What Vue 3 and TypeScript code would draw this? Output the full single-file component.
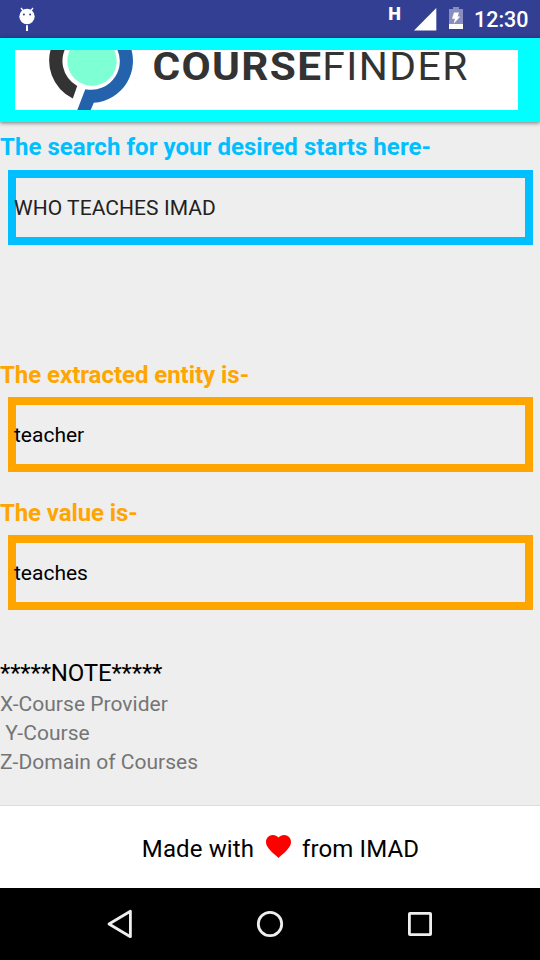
<script setup lang="ts">
interface Field {
  id: string
  label: string
  value: string
  tone: 'blue' | 'orange'
}

const fields: Field[] = [
  { id: 'query', label: 'The search for your desired starts here-', value: 'WHO TEACHES IMAD', tone: 'blue' },
  { id: 'entity', label: 'The extracted entity is-', value: 'teacher', tone: 'orange' },
  { id: 'value', label: 'The value is-', value: 'teaches', tone: 'orange' },
]

const notes: string[] = ['X-Course Provider', ' Y-Course', 'Z-Domain of Courses']
</script>

<template>
  <div class="screen">
    <header class="status">
      <svg class="bug" width="18" height="26" viewBox="0 0 18 26">
        <path d="M3 2l2.5 3M15 2l-2.5 3" stroke="#fff" stroke-width="1.4" />
        <circle cx="9" cy="10.5" r="7.7" fill="#fff" />
        <circle cx="5.9" cy="8.4" r="1" fill="#323f92" />
        <circle cx="12.1" cy="8.4" r="1" fill="#323f92" />
        <path d="M8 19.3h2V25H8z" fill="#fff" />
      </svg>
      <span class="net">H</span>
      <svg class="signal" width="23" height="23" viewBox="0 0 23 23">
        <path d="M0 22.5L22.3 0v22.5z" fill="#fff" />
      </svg>
      <svg class="battery" width="14" height="22" viewBox="0 0 14 22">
        <path d="M4 0h6v2h4v15H0V2h4z" fill="#fff" fill-opacity=".42" />
        <path d="M0 17h14v5H0z" fill="#fff" />
        <path d="M5 5.5h5L8.7 9.4h2.5L4.7 16.8l1.2-5H3z" fill="#fff" />
      </svg>
      <span class="clock">12:30</span>
    </header>

    <div class="toolbar">
      <svg class="logo" width="503" height="60" viewBox="0 0 503 60">
        <defs>
          <clipPath id="logo-frame"><rect width="503" height="60" /></clipPath>
        </defs>
        <g clip-path="url(#logo-frame)">
          <path d="M37.6-6A42 42 0 0 0 57.8 48.5L62.2 36A28.5 28.5 0 0 1 53.1-6z" fill="#333" />
          <path d="M98.9-6A28.5 28.5 0 0 1 70.3 39.2L62.3 60H75.7L78.8 52.8A42 42 0 0 0 114.4-6z" fill="#2463ab" />
          <circle cx="77" cy="11" r="24.7" fill="#7fffd4" />
        </g>
        <text class="logo-bold" transform="translate(137.5 30) scale(1.1 1)" textLength="153.2" lengthAdjust="spacing">COURSE</text>
        <text class="logo-thin" transform="translate(307.2 30) scale(1.06 1)" textLength="137" lengthAdjust="spacing">FINDER</text>
      </svg>
    </div>

    <main class="content">
      <section v-for="field in fields" :key="field.id" class="field" :class="[field.tone, field.id]">
        <h2 class="label">{{ field.label }}</h2>
        <div class="box"><span class="text">{{ field.value }}</span></div>
      </section>
      <section class="notes">
        <h3 class="note-title">*****NOTE*****</h3>
        <p v-for="note in notes" :key="note" class="note">{{ note }}</p>
      </section>
    </main>

    <footer class="credit">
      <span>Made with</span>
      <svg class="heart" width="25" height="23" viewBox="0 0 25 23">
        <path d="M12.5 23l-1.8-1.65C4.25 15.5 0 11.65 0 6.9 0 3.05 3 0 6.9 0c2.15 0 4.2 1 5.6 2.6C13.9 1 15.95 0 18.1 0 22 0 25 3.05 25 6.9c0 4.75-4.25 8.6-10.7 14.45z" fill="#f00" />
      </svg>
      <span>from IMAD</span>
    </footer>

    <nav class="navbar">
      <svg width="30" height="30" viewBox="0 0 30 30"><path d="M4 15L25.4 2.3v25.4z" /></svg>
      <svg width="30" height="30" viewBox="0 0 30 30"><circle cx="15" cy="15" r="11.7" /></svg>
      <svg width="30" height="30" viewBox="0 0 30 30"><rect x="4.4" y="4.4" width="21.2" height="21.2" rx=".6" /></svg>
    </nav>
  </div>
</template>

<style>
body {
  margin: 0;
}
</style>

<style scoped>
.screen {
  width: 540px;
  height: 960px;
  display: flex;
  flex-direction: column;
  overflow: hidden;
  background: #eee;
  color: #000;
  font-family: Roboto, sans-serif;
}
.status {
  height: 38px;
  flex: none;
  box-sizing: border-box;
  display: flex;
  align-items: flex-start;
  padding: 0 11.5px 0 18px;
  background: #323f92;
  color: #fff;
}
.bug {
  margin-top: 6px;
}
.net {
  margin: 4px 13.5px 0 auto;
  font-size: 18px;
  line-height: 20px;
  font-weight: 900;
}
.signal {
  margin: 8px 12px 0 0;
}
.battery {
  margin: 7px 10.5px 0 0;
}
.clock {
  margin-top: 7px;
  font-size: 21.5px;
  line-height: 26px;
  font-weight: 500;
}
.toolbar {
  height: 84px;
  flex: none;
  box-sizing: border-box;
  padding: 12px 22px 12px 15px;
  background: #0ff;
  box-shadow: 0 1px 4px rgba(0, 0, 0, 0.5);
}
.logo {
  display: block;
  overflow: visible;
  background: #fff;
}
.logo-bold,
.logo-thin {
  font-family: Roboto, sans-serif;
  font-size: 38.5px;
  fill: #333;
}
.logo-bold {
  font-weight: 700;
}
.content {
  flex: 1;
}
.field {
  height: 138px;
  padding-top: 10px;
  box-sizing: border-box;
}
.field.query {
  height: 228px;
}
.label {
  margin: 0;
  height: 37px;
  font-size: 24px;
  line-height: 30px;
  font-weight: 700;
  letter-spacing: -0.04px;
}
.query .label {
  height: 38px;
  letter-spacing: 0.05px;
}
.value .label {
  letter-spacing: -0.1px;
}
.box {
  width: 525px;
  height: 75px;
  margin-left: 8px;
  box-sizing: border-box;
  display: flex;
  align-items: center;
  border: 8px solid;
}
.text {
  margin-left: -2px;
  font-size: 21px;
  line-height: 28px;
  color: #000;
}
.query .text {
  color: #212121;
  letter-spacing: 0.06px;
}
.blue {
  color: #00bfff;
}
.orange {
  color: #ffa500;
}
.notes {
  padding-top: 32px;
}
.note-title {
  margin: 0 0 2px;
  font-size: 24px;
  line-height: 30px;
  font-weight: 400;
  letter-spacing: -0.17px;
}
.note {
  margin: 0;
  font-size: 21px;
  line-height: 29px;
  color: #757575;
  white-space: pre;
  letter-spacing: 0.03px;
}
.credit {
  height: 83px;
  flex: none;
  box-sizing: border-box;
  display: flex;
  align-items: center;
  justify-content: center;
  gap: 11.5px;
  padding: 3px 0 0 21px;
  border-top: 1px solid #ddd;
  background: #fff;
  font-size: 24px;
  line-height: 30px;
  letter-spacing: 0.12px;
}
.heart {
  margin-top: -5px;
}
.navbar {
  height: 72px;
  flex: none;
  display: flex;
  align-items: center;
  justify-content: center;
  gap: 120px;
  background: #000;
}
.navbar svg {
  fill: none;
  stroke: #eee;
  stroke-width: 2.8;
  stroke-linejoin: round;
}
</style>
